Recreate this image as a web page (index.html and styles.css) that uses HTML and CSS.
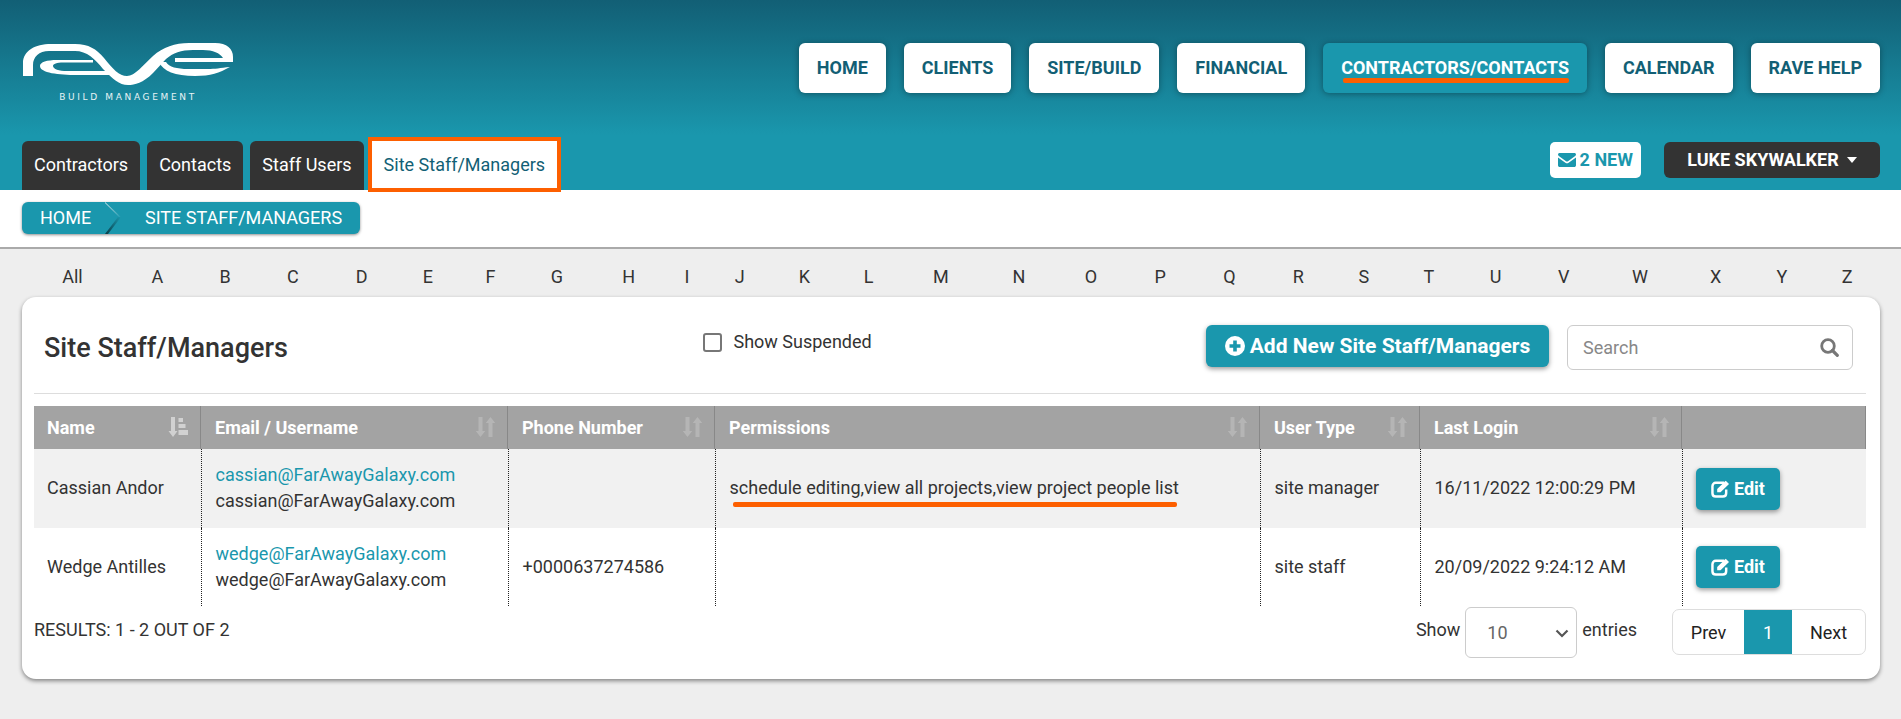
FILE: index.html
```html
<!DOCTYPE html>
<html lang="en">
<head>
<meta charset="utf-8">
<title>Site Staff/Managers</title>
<link rel="stylesheet" href="styles.css">
</head>
<body>
<header class="header">
  <div class="header-top">
    <a class="logo">
      <svg class="logo-mark" viewBox="0 0 210 42" width="210" height="42">
        <path d="M0 33L0 20C0 8 12 1 28 1L52 1C66 1 73 6 81 15C90 26 96 33 104 33C112 33 120 22 130 13C140 4 152 0 166 0L192 0C204 0 210 6 210 14L210 19L152 19L152 15L200 15C197 10 190 7 180 7L170 7C158 7 150 10 143 16L130 30C120 40 112 42 105 42C96 42 90 36 80 26C72 16 64 8 52 8L26 8C16 8 10 14 10 22L10 33Z"/>
        <path d="M70 17L70 19.500L40 19.500C34 19.500 30 21 30 23C30 26 36 28 44 28L84 28L91 32L54 32C36 32 17 30 17 23C17 19 24 17 34 17Z"/>
        <path d="M136 19L143 19C146 24 154 26 165 26L185 26C192 26 197 25 207 24C196 30 188 33 172 33C152 33 140 28 136 19Z"/>
      </svg>
      <span class="logo-sub">BUILD MANAGEMENT</span>
    </a>
    <nav class="main-nav">
      <a class="nav-btn">HOME</a>
      <a class="nav-btn">CLIENTS</a>
      <a class="nav-btn">SITE/BUILD</a>
      <a class="nav-btn">FINANCIAL</a>
      <a class="nav-btn nav-active"><span class="nav-mark">CONTRACTORS/CONTACTS</span></a>
      <a class="nav-btn">CALENDAR</a>
      <a class="nav-btn">RAVE HELP</a>
    </nav>
  </div>
  <div class="header-bottom">
    <div class="tabs">
      <a class="tab">Contractors</a>
      <a class="tab">Contacts</a>
      <a class="tab">Staff Users</a>
      <a class="tab tab-active">Site Staff/Managers</a>
    </div>
    <div class="user-area">
      <a class="msg-btn">
        <svg class="msg-icon" viewBox="0 0 18 14" width="18" height="14"><path d="M1.600 0H16.400C17.300 0 18 .7 18 1.600C18 2.200 17.700 2.700 17.200 3.100L10 8.200C9.400 8.600 8.600 8.600 8 8.200L.8 3.100C.3 2.700 0 2.200 0 1.600C0 .7 .7 0 1.600 0ZM0 4.500L7.400 9.700C8.400 10.400 9.600 10.400 10.600 9.700L18 4.500V12.200C18 13.200 17.200 14 16.200 14H1.800C.8 14 0 13.200 0 12.200Z"/></svg>
        2 NEW
      </a>
      <a class="user-btn">LUKE SKYWALKER<span class="caret"></span></a>
    </div>
  </div>
</header>

<div class="crumb-bar">
  <div class="crumbs">
    <a class="crumb crumb-home">HOME
      <svg class="crumb-arrow" viewBox="0 0 17 32" width="17" height="32">
        <defs>
          <linearGradient id="crumbLight" x1="0" y1="0" x2="1" y2="0"><stop offset="0" stop-color="#d5e6ea"/><stop offset="1" stop-color="#1a97ad"/></linearGradient>
          <linearGradient id="crumbDark" x1="1" y1="0" x2="0" y2="1"><stop offset="0" stop-color="#1a97ad"/><stop offset="1" stop-color="#0b3c47"/></linearGradient>
        </defs>
        <path d="M0 0L16 15L15 16L0 1Z" fill="url(#crumbLight)"/>
        <path d="M16 15L3 32H0L13 15Z" fill="url(#crumbDark)"/>
      </svg>
    </a>
    <a class="crumb crumb-current">SITE STAFF/MANAGERS</a>
  </div>
</div>

<table class="alpha">
  <tr>
    <td>All</td><td>A</td><td>B</td><td>C</td><td>D</td><td>E</td><td>F</td><td>G</td><td>H</td><td>I</td><td>J</td><td>K</td><td>L</td><td>M</td><td>N</td><td>O</td><td>P</td><td>Q</td><td>R</td><td>S</td><td>T</td><td>U</td><td>V</td><td>W</td><td>X</td><td>Y</td><td>Z</td>
  </tr>
</table>

<main class="card">
  <div class="card-head">
    <h1 class="card-title">Site Staff/Managers</h1>
    <label class="suspended"><span class="check"></span>Show Suspended</label>
    <a class="add-btn">
      <svg class="add-icon" viewBox="0 0 20 20" width="20" height="20"><path fill-rule="evenodd" d="M10 0A10 10 0 1 1 10 20A10 10 0 1 1 10 0ZM8.200 4.500V8.200H4.500V11.800H8.200V15.500H11.800V11.800H15.500V8.200H11.800V4.500Z"/></svg>
      Add New Site Staff/Managers
    </a>
    <div class="search">
      <span class="search-text">Search</span>
      <svg class="search-icon" viewBox="0 0 19 19" width="19" height="19"><circle cx="8" cy="8" r="6.300" fill="none" stroke="#777" stroke-width="2.800"/><path d="M12.500 12.500L17.300 17.300" stroke="#777" stroke-width="3.200" stroke-linecap="round"/></svg>
    </div>
  </div>

  <table class="grid">
    <colgroup>
      <col class="c-name"><col class="c-email"><col class="c-phone"><col class="c-perm"><col class="c-type"><col class="c-login"><col class="c-act">
    </colgroup>
    <thead>
      <tr>
        <th><div class="th-in">Name
          <svg class="sort sort-on" viewBox="0 0 19 20" width="19" height="20"><path d="M2 0H6V14H8.500L4 20L-.5 14H2Z"/><path d="M9.500 1H14V5H9.500ZM9.500 7H16.500V11H9.500ZM9.500 13H19V18H9.500Z"/></svg>
        </div></th>
        <th><div class="th-in">Email / Username
          <svg class="sort" viewBox="0 0 19 20" width="19" height="20"><path d="M2.500 0H6.500V14H9.200L4.500 20L-.2 14H2.500Z"/><path d="M12.500 20H16.500V6H19.200L14.500 0L9.800 6H12.500Z"/></svg>
        </div></th>
        <th><div class="th-in">Phone Number
          <svg class="sort" viewBox="0 0 19 20" width="19" height="20"><path d="M2.500 0H6.500V14H9.200L4.500 20L-.2 14H2.500Z"/><path d="M12.500 20H16.500V6H19.200L14.500 0L9.800 6H12.500Z"/></svg>
        </div></th>
        <th><div class="th-in">Permissions
          <svg class="sort" viewBox="0 0 19 20" width="19" height="20"><path d="M2.500 0H6.500V14H9.200L4.500 20L-.2 14H2.500Z"/><path d="M12.500 20H16.500V6H19.200L14.500 0L9.800 6H12.500Z"/></svg>
        </div></th>
        <th><div class="th-in">User Type
          <svg class="sort" viewBox="0 0 19 20" width="19" height="20"><path d="M2.500 0H6.500V14H9.200L4.500 20L-.2 14H2.500Z"/><path d="M12.500 20H16.500V6H19.200L14.500 0L9.800 6H12.500Z"/></svg>
        </div></th>
        <th><div class="th-in">Last Login
          <svg class="sort" viewBox="0 0 19 20" width="19" height="20"><path d="M2.500 0H6.500V14H9.200L4.500 20L-.2 14H2.500Z"/><path d="M12.500 20H16.500V6H19.200L14.500 0L9.800 6H12.500Z"/></svg>
        </div></th>
        <th></th>
      </tr>
    </thead>
    <tbody>
      <tr class="row-a">
        <td class="first">Cassian Andor</td>
        <td><a class="mail">cassian@FarAwayGalaxy.com</a><br>cassian@FarAwayGalaxy.com</td>
        <td></td>
        <td><span class="perm-mark">schedule editing,view all projects,view project people list</span></td>
        <td>site manager</td>
        <td>16/11/2022 12:00:29 PM</td>
        <td class="act"><a class="edit-btn"><svg class="edit-icon" viewBox="0 0 20 19" width="19" height="18"><path d="M14 3H5C3 3 1.500 4.500 1.500 6.500V14C1.500 16 3 17.500 5 17.500H12.500C14.500 17.500 16 16 16 14V10" fill="none" stroke="#fff" stroke-width="2.600"/><path d="M6.500 9.500L15.500 .8L19 4.200L10 13H6.500Z" fill="#fff"/></svg>Edit</a></td>
      </tr>
      <tr class="row-b">
        <td class="first">Wedge Antilles</td>
        <td><a class="mail">wedge@FarAwayGalaxy.com</a><br>wedge@FarAwayGalaxy.com</td>
        <td>+0000637274586</td>
        <td></td>
        <td>site staff</td>
        <td>20/09/2022 9:24:12 AM</td>
        <td class="act"><a class="edit-btn"><svg class="edit-icon" viewBox="0 0 20 19" width="19" height="18"><path d="M14 3H5C3 3 1.500 4.500 1.500 6.500V14C1.500 16 3 17.500 5 17.500H12.500C14.500 17.500 16 16 16 14V10" fill="none" stroke="#fff" stroke-width="2.600"/><path d="M6.500 9.500L15.500 .8L19 4.200L10 13H6.500Z" fill="#fff"/></svg>Edit</a></td>
      </tr>
    </tbody>
  </table>

  <div class="card-foot">
    <div class="results foot-text">RESULTS: 1 - 2 OUT OF 2</div>
    <div class="length">
      <span class="foot-text">Show</span>
      <div class="select">10
        <svg class="select-icon" viewBox="0 0 14 9" width="14" height="9"><path d="M1.500 1.500L7 7L12.500 1.500" fill="none" stroke="#555" stroke-width="2.200"/></svg>
      </div>
      <span class="foot-text">entries</span>
    </div>
    <div class="pager">
      <a class="page page-prev">Prev</a>
      <a class="page page-on">1</a>
      <a class="page page-next">Next</a>
    </div>
  </div>
</main>
</body>
</html>
```
FILE: styles.css
```css
* { box-sizing: border-box; }
html, body { margin: 0; padding: 0; }
body {
  background: #eee;
  color: #333;
  font-family: Roboto, "Liberation Sans", sans-serif;
  font-size: 18px;
  height: 719px;
  overflow: hidden;
}
a { text-decoration: none; color: inherit; }

/* header */
.header {
  height: 190px;
  padding: 43px 21px 0 22px;
  display: flex;
  flex-direction: column;
  background: linear-gradient(#125f75 0, #1a97ad 135px);
}
.header-top { display: flex; justify-content: space-between; align-items: flex-start; padding-left: 1px; }
.logo { display: flex; flex-direction: column; align-items: center; width: 210px; }
.logo-mark { display: block; fill: #fff; }
.logo-sub {
  margin-top: 7px;
  font-family: "DejaVu Sans", sans-serif;
  font-size: 9px;
  line-height: 10px;
  letter-spacing: 2.65px;
  color: #e8f3f5;
  white-space: nowrap;
}
.main-nav { display: flex; gap: 18px; }
.nav-btn {
  height: 50px;
  padding: 0 18px 1px;
  display: flex;
  align-items: center;
  background: #fff;
  border-radius: 6px;
  color: #125f75;
  font-weight: 700;
  font-size: 18px;
  box-shadow: 0 1px 6px rgba(0,0,0,.35);
}
.nav-active { background: #1a97ad; color: #fff; }
.nav-mark { position: relative; }
.nav-mark::after {
  content: "";
  position: absolute;
  left: 2px; right: 0; bottom: -5px;
  height: 5px;
  background: #fd5f00;
  border-radius: 2px;
}
.header-bottom { margin-top: auto; display: flex; justify-content: space-between; align-items: flex-start; }
.tabs { display: flex; gap: 7px; }
.tab {
  height: 49px;
  padding: 0 12px 2px;
  display: flex;
  align-items: center;
  background: #333;
  color: #fff;
  border-radius: 6px 6px 0 0;
}
.tab-active {
  position: relative;
  background: #fff;
  color: #125f75;
  outline: 4px solid #fd5f00;
  z-index: 1;
  height: 47px;
  padding-bottom: 0;
  margin-left: 1px;
  border-radius: 0;
}
.user-area { display: flex; align-items: center; gap: 23px; padding-top: 1px; }
.msg-btn {
  height: 36px;
  padding: 0 8px 1px;
  display: flex;
  align-items: center;
  gap: 4px;
  background: #fff;
  border-radius: 5px;
  color: #1a97ad;
  font-weight: 700;
}
.msg-icon { fill: #1a97ad; }
.user-btn {
  height: 36px;
  width: 216px;
  padding-bottom: 2px;
  display: flex;
  align-items: center;
  justify-content: center;
  background: #333;
  color: #fff;
  font-weight: 700;
  border-radius: 6px;
}
.caret {
  margin-left: 8px;
  margin-top: 2px;
  border-left: 5.5px solid transparent;
  border-right: 5.5px solid transparent;
  border-top: 6px solid #fff;
}

/* breadcrumbs */
.crumb-bar {
  height: 59px;
  padding: 12px 22px 0;
  background: #fff;
  border-bottom: 2px solid #aaa;
}
.crumbs {
  display: inline-flex;
  height: 32px;
  align-items: center;
  background: #1a97ad;
  border-radius: 6px;
  color: #fff;
  box-shadow: 0 1px 3px rgba(0,0,0,.45);
}
.crumb { display: block; line-height: 32px; }
.crumb-home { position: relative; padding-left: 18px; width: 123px; }
.crumb-arrow { position: absolute; left: 83px; top: 0; }
.crumb-current { padding-right: 18px; }

/* alphabet */
.alpha {
  width: 1858px;
  margin: 0 21px 0 22px;
  border-collapse: collapse;
  height: 48px;
}
.alpha td { padding: 7px 3.5px 0; text-align: center; color: #333; }

/* card */
.card {
  margin: 0 21px 0 22px;
  height: 382px;
  padding: 28px 14px 0 12px;
  background: #fff;
  border-radius: 14px;
  box-shadow: 0 2px 4px rgba(0,0,0,.45);
}
.card-head {
  height: 69px;
  padding-left: 10px;
  display: flex;
  align-items: flex-start;
  border-bottom: 1px solid #ddd;
}
.card-title {
  margin: 7px 0 0;
  width: 659px;
  font-size: 27px;
  line-height: 32px;
  font-weight: 500;
  color: #333;
}
.suspended { display: flex; align-items: center; gap: 11.5px; margin-top: 5px; width: 503px; line-height: 24px; }
.check {
  width: 19px; height: 19px;
  border: 2px solid #777;
  border-radius: 3px;
}
.add-btn {
  width: 343px;
  height: 42px;
  display: flex;
  align-items: center;
  justify-content: center;
  gap: 5px;
  background: #1a97ad;
  color: #fff;
  font-size: 21px;
  font-weight: 700;
  border-radius: 6px;
  box-shadow: 0 2px 5px rgba(0,0,0,.4);
}
.add-icon { fill: #fff; }
.search {
  margin-left: 18px;
  width: 286px;
  height: 45px;
  padding: 0 13px 0 15px;
  display: flex;
  align-items: center;
  justify-content: space-between;
  border: 1px solid #ccc;
  border-radius: 6px;
}
.search-text { color: #888; }

/* table */
.grid {
  margin-top: 12px;
  width: 1832px;
  table-layout: fixed;
  border-collapse: separate;
  border-spacing: 0;
}
.c-name { width: 167px; }
.c-email { width: 307px; }
.c-phone { width: 207px; }
.c-perm { width: 545px; }
.c-type { width: 160px; }
.c-login { width: 262px; }
.c-act { width: 184px; }
.grid th {
  height: 43px;
  padding: 0 12px 1px 13px;
  background: #a3a3a3;
  color: #fff;
  font-weight: 700;
  text-align: left;
  border-right: 1px solid #888;
}
.grid th + th { padding-left: 14px; }
.th-in { display: flex; justify-content: space-between; align-items: center; }
.sort { fill: #fff; opacity: .2; overflow: visible; }
.sort-on { opacity: .5; }
.grid td {
  padding: 0 13px;
  border-left: 1px dotted #222;
  line-height: 26px;
  white-space: nowrap;
}
.grid td + td { padding-left: 13.5px; }
.grid td.first { border-left: 0; }
.row-a td { height: 79px; padding-bottom: 2px; background: #f1f1f1; }
.row-b td { height: 78px; background: #fff; }
.grid td.act { padding-left: 13px; padding-bottom: 0; }
.mail { color: #1a97ad; }
.perm-mark { position: relative; display: inline-block; }
.perm-mark::after {
  content: "";
  position: absolute;
  left: 3px; right: 2px; bottom: -6px;
  height: 5px;
  background: #fd5f00;
  border-radius: 2px;
}
.edit-btn {
  width: 84px;
  height: 42px;
  display: flex;
  align-items: center;
  justify-content: center;
  gap: 4px;
  background: #1a97ad;
  color: #fff;
  font-weight: 700;
  border-radius: 5px;
  box-shadow: 0 2px 5px rgba(0,0,0,.4);
}

/* footer */
.card-foot { display: flex; align-items: center; height: 52px; padding-top: 1px; }
.foot-text { margin-bottom: 6px; }
.results { flex: 1; }
.length { display: flex; align-items: center; gap: 5px; margin-right: 35px; }
.select {
  position: relative;
  width: 112px;
  height: 51px;
  padding-left: 21px;
  display: flex;
  align-items: center;
  color: #666;
  border: 1px solid #ccc;
  border-radius: 6px;
}
.select-icon { position: absolute; right: 7px; top: 21px; }
.pager {
  display: flex;
  height: 46px;
  margin-bottom: 1px;
  border: 1px solid #ddd;
  border-radius: 7px;
  overflow: hidden;
}
.page { display: flex; align-items: center; justify-content: center; color: #222; }
.page-prev { width: 71px; }
.page-on { width: 48px; background: #1a97ad; color: #fff; }
.page-next { width: 73px; }
```
